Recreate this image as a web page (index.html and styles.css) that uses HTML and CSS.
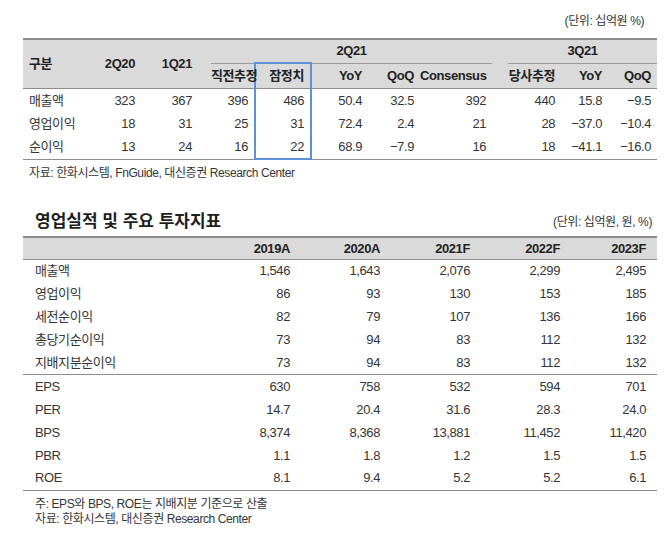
FILE: index.html
```html
<!DOCTYPE html>
<html lang="ko">
<head>
<meta charset="utf-8">
<link rel="stylesheet" href="styles.css">
</head>
<body>
<div class="page">
  <div class="unit-top">(단위: 십억원 %)</div>
  <table class="t1">
    <colgroup>
      <col class="c-lbl"><col class="c-2q20"><col class="c-1q21"><col class="c-sp1"><col class="c-prev"><col class="c-prov"><col class="c-yoy"><col class="c-qoq"><col class="c-cons"><col class="c-sp2"><col class="c-est"><col class="c-yoy2"><col class="c-qoq2">
    </colgroup>
    <thead>
      <tr class="r1">
        <th rowspan="2" class="lbl">구분</th>
        <th rowspan="2">2Q20</th>
        <th rowspan="2">1Q21</th>
        <th rowspan="2"></th>
        <th colspan="5" class="grp">2Q21</th>
        <th rowspan="2"></th>
        <th colspan="3" class="grp">3Q21</th>
      </tr>
      <tr class="r2">
        <th>직전추정</th>
        <th class="box box-top">잠정치</th>
        <th>YoY</th>
        <th>QoQ</th>
        <th>Consensus</th>
        <th>당사추정</th>
        <th>YoY</th>
        <th>QoQ</th>
      </tr>
    </thead>
    <tbody>
      <tr>
        <td class="lbl">매출액</td><td>323</td><td>367</td><td></td><td>396</td><td class="box">486</td><td>50.4</td><td>32.5</td><td>392</td><td></td><td>440</td><td>15.8</td><td>−9.5</td>
      </tr>
      <tr>
        <td class="lbl">영업이익</td><td>18</td><td>31</td><td></td><td>25</td><td class="box">31</td><td>72.4</td><td>2.4</td><td>21</td><td></td><td>28</td><td>−37.0</td><td>−10.4</td>
      </tr>
      <tr class="last">
        <td class="lbl">순이익</td><td>13</td><td>24</td><td></td><td>16</td><td class="box box-bottom">22</td><td>68.9</td><td>−7.9</td><td>16</td><td></td><td>18</td><td>−41.1</td><td>−16.0</td>
      </tr>
    </tbody>
  </table>
  <div class="source">자료: 한화시스템, FnGuide, 대신증권 Research Center</div>

  <div class="title-row">
    <h2 class="title">영업실적 및 주요 투자지표</h2>
    <div class="unit">(단위: 십억원, 원, %)</div>
  </div>
  <table class="t2">
    <colgroup>
      <col class="d-lbl"><col class="d-col"><col class="d-col"><col class="d-col"><col class="d-col"><col class="d-last">
    </colgroup>
    <thead>
      <tr>
        <th class="lbl"></th><th>2019A</th><th>2020A</th><th>2021F</th><th>2022F</th><th class="end">2023F</th>
      </tr>
    </thead>
    <tbody>
      <tr><td class="lbl">매출액</td><td>1,546</td><td>1,643</td><td>2,076</td><td>2,299</td><td class="end">2,495</td></tr>
      <tr><td class="lbl">영업이익</td><td>86</td><td>93</td><td>130</td><td>153</td><td class="end">185</td></tr>
      <tr><td class="lbl">세전순이익</td><td>82</td><td>79</td><td>107</td><td>136</td><td class="end">166</td></tr>
      <tr><td class="lbl">총당기순이익</td><td>73</td><td>94</td><td>83</td><td>112</td><td class="end">132</td></tr>
      <tr><td class="lbl">지배지분순이익</td><td>73</td><td>94</td><td>83</td><td>112</td><td class="end">132</td></tr>
      <tr class="sep"><td class="lbl">EPS</td><td>630</td><td>758</td><td>532</td><td>594</td><td class="end">701</td></tr>
      <tr><td class="lbl">PER</td><td>14.7</td><td>20.4</td><td>31.6</td><td>28.3</td><td class="end">24.0</td></tr>
      <tr><td class="lbl">BPS</td><td>8,374</td><td>8,368</td><td>13,881</td><td>11,452</td><td class="end">11,420</td></tr>
      <tr><td class="lbl">PBR</td><td>1.1</td><td>1.8</td><td>1.2</td><td>1.5</td><td class="end">1.5</td></tr>
      <tr class="last"><td class="lbl">ROE</td><td>8.1</td><td>9.4</td><td>5.2</td><td>5.2</td><td class="end">6.1</td></tr>
    </tbody>
  </table>
  <div class="notes">
    <div>주: EPS와 BPS, ROE는 지배지분 기준으로 산출</div>
    <div>자료: 한화시스템, 대신증권 Research Center</div>
  </div>
</div>
</body>
</html>
```

FILE: styles.css
```css
html, body {
  margin: 0;
  padding: 0;
  background: #ffffff;
}

body {
  font-family: "Liberation Sans", "Noto Sans CJK KR", sans-serif;
  color: #353535;
  font-size: 13px;
  letter-spacing: -0.4px;
}

.page {
  width: 634px;
  padding: 13px 10px 0 23px;
}

.unit-top {
  text-align: right;
  padding-right: 13px;
  font-size: 12px;
  line-height: 16px;
  height: 16px;
  margin-bottom: 9px;
}

table {
  border-collapse: collapse;
  table-layout: fixed;
  width: 634px;
}

th, td {
  padding: 0 6px 0 0;
  line-height: 16px;
  text-align: right;
  vertical-align: middle;
  white-space: nowrap;
}

th {
  font-weight: bold;
  color: #222222;
}

/* ---- table 1 ---- */
.c-lbl { width: 67px; }
.c-2q20 { width: 51px; }
.c-1q21 { width: 57px; }
.c-sp1 { width: 13px; }
.c-prev { width: 44px; }
.c-prov { width: 56px; }
.c-yoy { width: 57px; }
.c-qoq { width: 52px; }
.c-cons { width: 72px; }
.c-sp2 { width: 16px; }
.c-est { width: 53px; }
.c-yoy2 { width: 47px; }
.c-qoq2 { width: 49px; }

.t1 thead {
  background: #dadada;
}

.t1 thead tr.r1 th {
  height: 22px;
  border-top: 2px solid #8d8d8d;
}

.t1 thead tr.r2 th {
  height: 24px;
  border-bottom: 1px solid #8d8d8d;
}

.t1 thead th[rowspan] {
  border-bottom: 1px solid #8d8d8d;
}

.t1 th.lbl,
.t1 td.lbl {
  text-align: left;
  padding-left: 6px;
}

.t1 th.grp {
  text-align: center;
  padding: 0;
  border-bottom: 1px solid #9a9a9a;
}

.t1 td {
  height: 23px;
}

.t1 tr.last td {
  border-bottom: 1px solid #8d8d8d;
}

.t1 .box {
  border-left: 2px solid #5e90d6;
  border-right: 2px solid #5e90d6;
}

.t1 .box-top {
  border-top: 2px solid #5e90d6;
}

.t1 tr.last td.box-bottom {
  border-bottom: 2px solid #5e90d6;
}

.source {
  margin-top: 5px;
  padding-left: 6px;
  font-size: 12px;
  line-height: 16px;
}

/* ---- section 2 ---- */
.title-row {
  display: flex;
  justify-content: space-between;
  align-items: center;
  margin-top: 30px;
  margin-bottom: 3px;
  height: 22px;
}

.title {
  margin: 0;
  padding-left: 12px;
  font-size: 17px;
  font-weight: bold;
  color: #1e1e1e;
  letter-spacing: 0;
  line-height: 22px;
}

.unit {
  padding-right: 5px;
  font-size: 12px;
  line-height: 16px;
}

.d-lbl { width: 183px; }
.d-col { width: 90px; }
.d-last { width: 91px; }

.t2 thead {
  background: #dadada;
}

.t2 thead th {
  height: 21px;
  border-top: 2px solid #8d8d8d;
  border-bottom: 1px solid #8d8d8d;
}

.t2 td {
  height: 22.9px;
}

.t2 th.lbl,
.t2 td.lbl {
  text-align: left;
  padding-left: 12px;
}

.t2 .end {
  padding-right: 11px;
}

.t2 tr.sep td {
  border-top: 1px solid #8d8d8d;
}

.t2 tr.last td {
  border-bottom: 1px solid #8d8d8d;
}

.notes {
  margin-top: 6px;
  padding-left: 12px;
  font-size: 12px;
  line-height: 15px;
}
```
